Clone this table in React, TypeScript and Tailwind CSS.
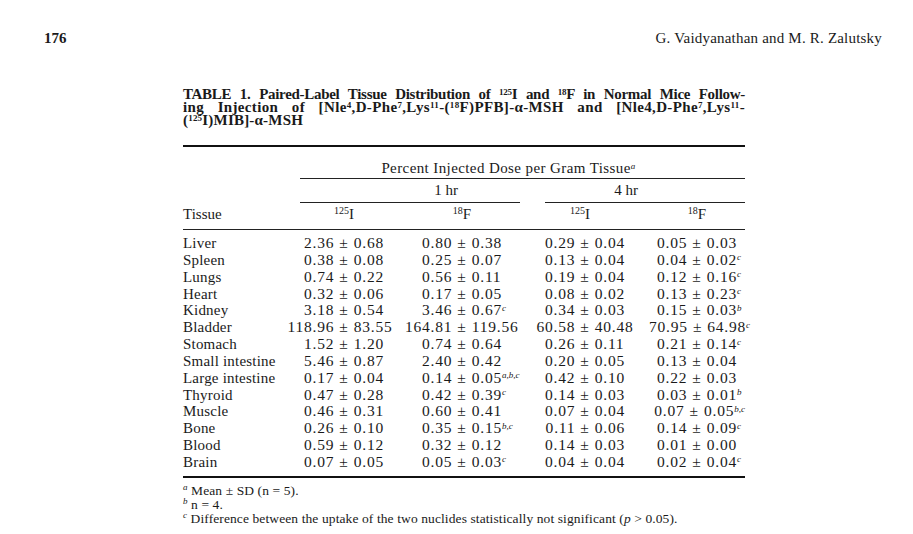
import React from "react";

const data: [string, string[]][] = [
  ["Liver", ["2.36 ± 0.68", "0.80 ± 0.38", "0.29 ± 0.04", "0.05 ± 0.03"]],
  ["Spleen", ["0.38 ± 0.08", "0.25 ± 0.07", "0.13 ± 0.04", "0.04 ± 0.02^c"]],
  ["Lungs", ["0.74 ± 0.22", "0.56 ± 0.11", "0.19 ± 0.04", "0.12 ± 0.16^c"]],
  ["Heart", ["0.32 ± 0.06", "0.17 ± 0.05", "0.08 ± 0.02", "0.13 ± 0.23^c"]],
  ["Kidney", ["3.18 ± 0.54", "3.46 ± 0.67^c", "0.34 ± 0.03", "0.15 ± 0.03^b"]],
  ["Bladder", ["118.96 ± 83.55", "164.81 ± 119.56", "60.58 ± 40.48", "70.95 ± 64.98^c"]],
  ["Stomach", ["1.52 ± 1.20", "0.74 ± 0.64", "0.26 ± 0.11", "0.21 ± 0.14^c"]],
  ["Small intestine", ["5.46 ± 0.87", "2.40 ± 0.42", "0.20 ± 0.05", "0.13 ± 0.04"]],
  ["Large intestine", ["0.17 ± 0.04", "0.14 ± 0.05^a,b,c", "0.42 ± 0.10", "0.22 ± 0.03"]],
  ["Thyroid", ["0.47 ± 0.28", "0.42 ± 0.39^c", "0.14 ± 0.03", "0.03 ± 0.01^b"]],
  ["Muscle", ["0.46 ± 0.31", "0.60 ± 0.41", "0.07 ± 0.04", "0.07 ± 0.05^b,c"]],
  ["Bone", ["0.26 ± 0.10", "0.35 ± 0.15^b,c", "0.11 ± 0.06", "0.14 ± 0.09^c"]],
  ["Blood", ["0.59 ± 0.12", "0.32 ± 0.12", "0.14 ± 0.03", "0.01 ± 0.00"]],
  ["Brain", ["0.07 ± 0.05", "0.05 ± 0.03^c", "0.04 ± 0.04", "0.02 ± 0.04^c"]],
];

const cols = "grid grid-cols-[102px_118px_118px_128px_96px]";

function Val({ v }: { v: string }) {
  const [main, sup] = v.split("^");
  const [a, b] = main.split(" ± ");
  return (
    <div className="flex whitespace-nowrap text-[15.5px] tracking-[0.8px]">
      <span className="flex-1 text-right">{a}</span>
      <span className="px-[5px]">±</span>
      <span className="flex-1 text-left">
        {b}
        {sup && <sup className="italic text-[9px] tracking-normal">{sup}</sup>}
      </span>
    </div>
  );
}

function Iso({ m, s }: { m: string; s: string }) {
  return (
    <span>
      <sup className="text-[10px]">{m}</sup>
      {s}
    </span>
  );
}

function T({ children }: { children: React.ReactNode }) {
  return <sup className="text-[9px] -top-[4px]">{children}</sup>;
}

export default function App() {
  return (
    <div className="w-[913px] h-[534px] bg-white overflow-hidden text-[#1a1a1a] font-['Liberation_Serif','Times_New_Roman',serif]">
      <div className="flex justify-between pl-[44px] pr-[31px] pt-[28px] leading-[20px]">
        <span className="font-bold text-[15px]">176</span>
        <span className="text-[15px] tracking-[0.2px]">G. Vaidyanathan and M. R. Zalutsky</span>
      </div>

      <div className="ml-[183px] w-[562px]">
        <div className="mt-[40px] font-bold text-[15px] leading-[13px]">
          <div className="text-justify [text-align-last:justify] tracking-[-0.3px] whitespace-nowrap">
            TABLE 1. Paired-Label Tissue Distribution of <T>125</T>I and <T>18</T>F in Normal Mice Follow-
          </div>
          <div className="text-justify [text-align-last:justify] tracking-[0.35px] whitespace-nowrap">
            ing Injection of [Nle<T>4</T>,D-Phe<T>7</T>,Lys<T>11</T>-(<T>18</T>F)PFB]-α-MSH and [Nle4,D-Phe<T>7</T>,Lys<T>11</T>-
          </div>
          <div className="tracking-[0.2px]">
            (<T>125</T>I)MIB]-α-MSH
          </div>
        </div>

        <div className="mt-[18px] h-[2px] bg-[#111]" />

        <div className={`${cols} text-[15px]`}>
          <div className="col-start-2 col-span-4 ml-[15px] pr-[28px] mt-[13px] leading-[16px] text-center tracking-[0.4px]">
            Percent Injected Dose per Gram Tissue<sup className="italic text-[9px]">a</sup>
          </div>
          <div className="col-start-2 col-span-4 ml-[15px] mt-[2px] h-px bg-[#222]" />

          <div className="col-start-2 col-span-2 ml-[15px] mr-px pl-[72px] pt-[3px] leading-[16px] text-center">1 hr</div>
          <div className="col-start-4 col-span-2 ml-[24px] pr-[38px] pt-[3px] leading-[16px] text-center">4 hr</div>
          <div className="col-start-2 col-span-2 ml-[15px] mr-px mt-[4px] h-px bg-[#222]" />
          <div className="col-start-4 col-span-2 ml-[24px] mt-[4px] h-px bg-[#222]" />

          <div className="col-start-1 pt-[3px] leading-[16px]">Tissue</div>
          <div className="pt-[3px] leading-[16px] text-center"><Iso m="125" s="I" /></div>
          <div className="pt-[3px] leading-[16px] text-center"><Iso m="18" s="F" /></div>
          <div className="pt-[3px] pr-[10px] leading-[16px] text-center"><Iso m="125" s="I" /></div>
          <div className="pt-[3px] leading-[16px] text-center"><Iso m="18" s="F" /></div>
          <div className="col-span-5 mt-[7px] h-px bg-[#222]" />

          <div className={`col-span-5 ${cols} pt-[5px] leading-[16.85px]`}>
            {data.map(([name, vals]) => (
              <React.Fragment key={name}>
                <div className="tracking-[0.2px] whitespace-nowrap">{name}</div>
                {vals.map((v, i) => (
                  <Val key={i} v={v} />
                ))}
              </React.Fragment>
            ))}
          </div>
        </div>

        <div className="mt-[5px] h-[2px] bg-[#111]" />

        <div className="mt-[6px] text-[13.5px] leading-[14px] tracking-[0.1px]">
          <div><sup className="italic text-[9px]">a</sup> Mean ± SD (n = 5).</div>
          <div><sup className="italic text-[9px]">b</sup> n = 4.</div>
          <div>
            <sup className="italic text-[9px]">c</sup> Difference between the uptake of the two nuclides statistically not significant (<span className="italic">p</span> &gt; 0.05).
          </div>
        </div>
      </div>
    </div>
  );
}
